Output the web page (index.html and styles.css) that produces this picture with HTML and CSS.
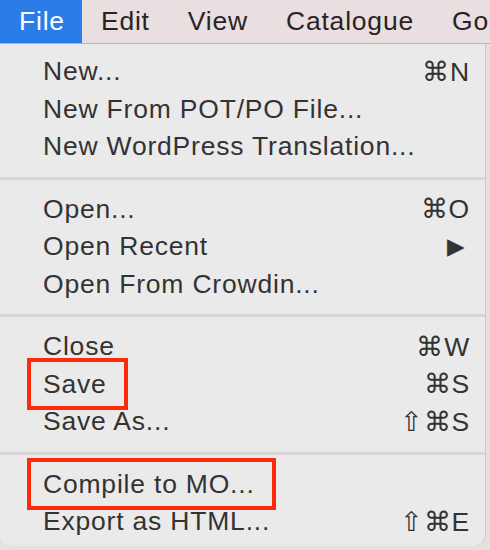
FILE: index.html
```html
<!DOCTYPE html>
<html>
<head>
<meta charset="utf-8">
<link rel="stylesheet" href="styles.css">
</head>
<body>
<div class="screen">
  <div class="menubar">
    <span class="mb-item active">File</span>
    <span class="mb-item">Edit</span>
    <span class="mb-item">View</span>
    <span class="mb-item">Catalogue</span>
    <span class="mb-item">Go</span>
  </div>
  <div class="menu">
    <div class="group">
      <div class="row"><span class="label">New...</span><span class="key">⌘N</span></div>
      <div class="row"><span class="label">New From POT/PO File...</span></div>
      <div class="row"><span class="label">New WordPress Translation...</span></div>
    </div>
    <div class="sep"></div>
    <div class="group">
      <div class="row"><span class="label">Open...</span><span class="key">⌘O</span></div>
      <div class="row"><span class="label">Open Recent</span><span class="key arrow">▶</span></div>
      <div class="row"><span class="label">Open From Crowdin...</span></div>
    </div>
    <div class="sep"></div>
    <div class="group">
      <div class="row"><span class="label">Close</span><span class="key">⌘W</span></div>
      <div class="row"><span class="label boxed">Save</span><span class="key">⌘S</span></div>
      <div class="row"><span class="label">Save As...</span><span class="key">⇧⌘S</span></div>
    </div>
    <div class="sep"></div>
    <div class="group">
      <div class="row"><span class="label boxed">Compile to MO...</span></div>
      <div class="row"><span class="label">Export as HTML...</span><span class="key">⇧⌘E</span></div>
    </div>
  </div>
</div>
</body>
</html>
```
FILE: styles.css
```css
html, body {
  margin: 0;
  padding: 0;
}
body {
  width: 490px;
  height: 550px;
  overflow: hidden;
  background: #e9dfe0;
  font-family: "Liberation Sans", Arial, sans-serif;
}
.screen {
  display: flex;
  flex-direction: column;
  height: 550px;
}
.menubar {
  height: 43px;
  display: flex;
  align-items: stretch;
  background: #e9dfe0;
  border-bottom: 1px solid #b9b3b4;
  font-size: 26.5px;
  letter-spacing: 0.8px;
  color: #2b2323;
  overflow: hidden;
}
.mb-item {
  display: flex;
  align-items: center;
  padding: 0 19px 0 19px;
  white-space: nowrap;
}
.mb-item.active {
  background: #2a7de9;
  color: #ffffff;
  padding: 0 17px 0 19px;
}
.menu {
  width: 486px;
  height: 502px;
  background: #ebeaea;
  border-right: 1px solid #c9c6c6;
  border-bottom-left-radius: 12px;
  border-bottom-right-radius: 12px;
  padding-top: 9px;
  box-sizing: border-box;
  font-size: 26.5px;
  letter-spacing: 0.8px;
  color: #333333;
}
.row {
  height: 37.5px;
  display: flex;
  align-items: center;
  justify-content: space-between;
  padding: 0 15px 0 43px;
}
.label {
  position: relative;
  white-space: nowrap;
}
.boxed::after {
  content: "";
  position: absolute;
  left: -16px;
  right: -21px;
  top: -11px;
  bottom: -10px;
  border: 4px solid #fd2a0c;
}
.key {
  white-space: nowrap;
}
.arrow {
  font-size: 23px;
  padding-right: 4px;
}
.sep {
  height: 3px;
  background: #d7d6d6;
  margin: 11px 0 11px;
}
```
